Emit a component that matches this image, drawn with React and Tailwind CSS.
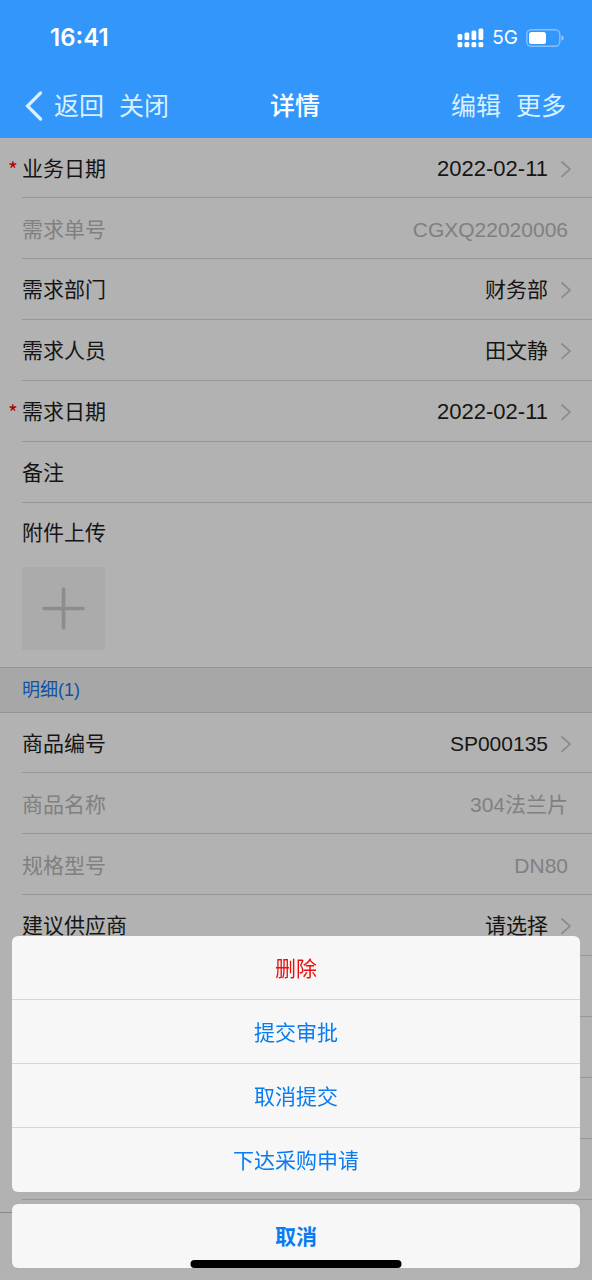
import { useState } from "react";

const headerFields = [
    { label: "业务日期", value: "2022-02-11", required: true, date: true },
    { label: "需求单号", value: "CGXQ22020006", disabled: true },
    { label: "需求部门", value: "财务部" },
    { label: "需求人员", value: "田文静" },
    { label: "需求日期", value: "2022-02-11", required: true, date: true },
];

const detailFields = [
    { label: "商品编号", value: "SP000135" },
    { label: "商品名称", value: "304法兰片", disabled: true },
    { label: "规格型号", value: "DN80", disabled: true },
    { label: "建议供应商", value: "请选择" },
];

const actions = ["提交审批", "取消提交", "下达采购申请"];

function StatusBar() {
    return (
        <div className="flex items-center justify-between h-[76px] pl-[50px] pr-7 font-['Inter',sans-serif]">
            <span className="text-[24px] leading-7 font-semibold">16:41</span>
            <div className="flex items-center gap-2">
                <svg width="27" height="20" viewBox="0 0 27 20" fill="currentColor" aria-hidden="true">
                    <rect x="0.5" y="6" width="4.8" height="6" rx="1.5" />
                    <rect x="7.5" y="4.5" width="4.8" height="7.5" rx="1.5" />
                    <rect x="14.5" y="2.5" width="4.8" height="9.5" rx="1.5" />
                    <rect x="21.5" y="0.5" width="4.8" height="11.5" rx="1.5" />
                    <rect x="0.5" y="14" width="4.8" height="5.3" rx="1.5" />
                    <rect x="7.5" y="14" width="4.8" height="5.3" rx="1.5" />
                    <rect x="14.5" y="14" width="4.8" height="5.3" rx="1.5" />
                    <rect x="21.5" y="14" width="4.8" height="5.3" rx="1.5" />
                </svg>
                <span className="text-[19px] leading-6">5G</span>
                <svg width="38" height="18" viewBox="0 0 38 18" fill="none" aria-hidden="true">
                    <rect x="0.8" y="0.8" width="33" height="16.4" rx="4.5" stroke="white" strokeOpacity="0.4" strokeWidth="1.4" />
                    <rect x="3" y="3" width="17" height="12" rx="2.5" fill="white" />
                    <path d="M35.5 6.2C37 6.8 37.7 7.8 37.7 9S37 11.2 35.5 11.8Z" fill="white" fillOpacity="0.5" />
                </svg>
            </div>
        </div>
    );
}

function NavBar({ onMore }) {
    return (
        <nav className="grid grid-cols-[1fr_auto_1fr] items-center h-[62px] pl-6 pr-[26px] pb-0.5 text-[25px] leading-8">
            <div className="flex items-center gap-[15px] text-[#d9f0ff]">
                <button className="flex items-center gap-[10px]">
                    <svg width="20" height="30" viewBox="0 0 20 30" fill="none" aria-hidden="true">
                        <path d="M16.5 2L3.5 15L16.5 28" stroke="currentColor" strokeWidth="3.2" strokeLinecap="round" />
                    </svg>
                    返回
                </button>
                <button>关闭</button>
            </div>
            <h1 className="font-medium">详情</h1>
            <div className="flex items-center justify-end gap-[15px] text-[#d9f0ff]">
                <button>编辑</button>
                <button onClick={onMore}>更多</button>
            </div>
        </nav>
    );
}

function Chevron() {
    return (
        <svg width="12" height="18" viewBox="0 0 12 18" fill="none" aria-hidden="true">
            <path d="M2 2L10 9.2L2 16.4" stroke="#c7c7cc" strokeWidth="1.8" strokeLinecap="round" strokeLinejoin="round" />
        </svg>
    );
}

function Label({ text, required }) {
    return (
        <span className="flex items-center">
            <span className="w-[22px] pl-2 text-left font-['Noto_Sans_CJK_SC',sans-serif] text-[#f00]">{required ? "*" : ""}</span>
            {text}
        </span>
    );
}

// divider is inset on the left, under the label
function Divider() {
    return <div className="ml-[22px] h-px bg-[#d9d9dc]" />;
}

function Field({ label, value, required, disabled, date }) {
    return (
        <li className="flex flex-col h-[61px] first:h-[60px]">
            {disabled ? (
                <div className="flex flex-1 items-center justify-between pt-[3px] pr-6 text-[#b8b8b8]">
                    <Label text={label} />
                    <span>{value}</span>
                </div>
            ) : (
                <button className="flex flex-1 items-center justify-between pt-0.5 pr-5">
                    <Label text={label} required={required} />
                    <span className="flex items-center gap-3">
                        <span className={date ? "text-[22px]" : ""}>{value}</span>
                        <Chevron />
                    </span>
                </button>
            )}
            <Divider />
        </li>
    );
}

function ActionSheet({ onClose }) {
    return (
        <div role="dialog" aria-modal="true" aria-label="更多" className="fixed inset-x-0 bottom-0 z-20 flex flex-col gap-3 p-3 text-[21px] leading-7 text-[#087cf0]">
            <div className="flex flex-col overflow-hidden rounded-md bg-[#f7f7f7] divide-y divide-[#d5d6d9]">
                <button className="h-16 pt-0.5 text-[#f00c0c]">删除</button>
                {actions.map((action) => (
                    <button key={action} className="h-16 pt-0.5">{action}</button>
                ))}
            </div>
            <button onClick={onClose} className="h-16 pt-0.5 rounded-md bg-[#f7f7f7] font-bold">取消</button>
        </div>
    );
}

function App() {
    const [sheetOpen, setSheetOpen] = useState(true);

    return (
        <div className="flex flex-col h-screen overflow-hidden bg-white font-['Liberation_Sans','Noto_Sans_CJK_SC',sans-serif]">
            <header className="shrink-0 bg-[#3396fb] text-white">
                <StatusBar />
                <NavBar onMore={() => setSheetOpen(true)} />
            </header>

            <main className="relative flex flex-col flex-1 overflow-hidden text-[21px] leading-7 text-[#1f1f22]">
                <div className="flex-1 overflow-hidden">
                    <ul>
                        {headerFields.map((field) => (
                            <Field key={field.label} {...field} />
                        ))}
                        <li className="flex flex-col h-[61px]">
                            <label htmlFor="remark" className="flex flex-1 items-center pt-0.5 pr-6">
                                <Label text="备注" />
                                <input id="remark" type="text" className="flex-1 min-w-0 ml-4 text-right outline-none" />
                            </label>
                            <Divider />
                        </li>
                    </ul>

                    <section className="flex flex-col gap-5 h-[164px] pt-4">
                        <Label text="附件上传" />
                        <button aria-label="附件上传" className="flex items-center justify-center size-[83px] ml-[22px] bg-[#f5f5f5]">
                            <svg width="43" height="43" viewBox="0 0 43 43" fill="none" aria-hidden="true">
                                <path d="M21.5 2V41M2 21.5H41" stroke="#c9c9c9" strokeWidth="3.6" strokeLinecap="round" />
                            </svg>
                        </button>
                    </section>

                    <h2 className="flex items-center h-[46px] px-[22px] border-y border-[#d5d5d8] bg-[#efefef] text-[18px] text-[#1677ee]">明细(1)</h2>

                    <ul>
                        {detailFields.map((field) => (
                            <Field key={field.label} {...field} />
                        ))}
                        {[1, 2, 3, 4].map((n) => (
                            <li key={n} className="flex flex-col justify-end h-[61px]">
                                <Divider />
                            </li>
                        ))}
                    </ul>
                </div>

                {/* bottom toolbar, its rule only runs under the left half */}
                <footer className="shrink-0 h-[68px] bg-white">
                    <div className="w-1/2 h-px bg-[#c4c4c8]" />
                </footer>

                {sheetOpen && <div onClick={() => setSheetOpen(false)} className="absolute inset-0 bg-black/30" />}
            </main>

            {sheetOpen && <ActionSheet onClose={() => setSheetOpen(false)} />}

            {/* home indicator */}
            <div className="fixed bottom-3 left-1/2 z-30 h-2 w-[211px] -translate-x-1/2 rounded-full bg-black" />
        </div>
    );
}

export default App;
